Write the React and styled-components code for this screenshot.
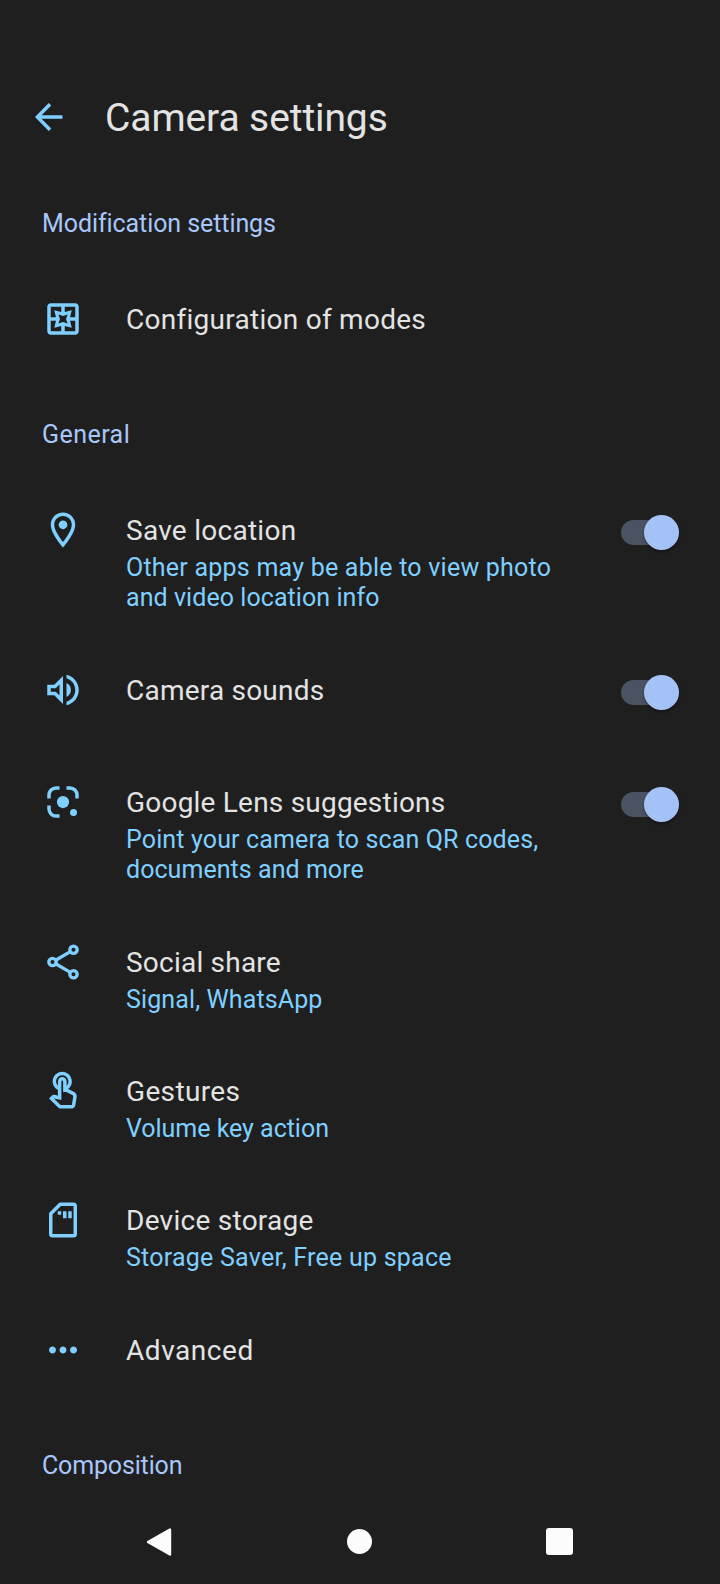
import React, { useState } from 'react';
import styled, { createGlobalStyle } from 'styled-components';
import { MdOutlinePages, MdOutlineLocationOn, MdOutlineVolumeUp, MdOutlineTouchApp, MdMoreHoriz } from 'react-icons/md';

const LensIcon = () => (
  <svg viewBox="0 0 24 24" fill="none">
    <path d="M4 10V8a4 4 0 0 1 4-4h2M14 4h2a4 4 0 0 1 4 4v2M4 14v2a4 4 0 0 0 4 4h2" stroke="currentColor" strokeWidth="2" />
    <circle cx="12" cy="12" r="3.5" fill="currentColor" />
    <circle cx="18" cy="18" r="2" fill="currentColor" />
  </svg>
);

const ShareIcon = () => (
  <svg viewBox="0 0 24 24" fill="none" stroke="currentColor" strokeWidth="1.9">
    <path d="M7.8 11L16.2 6.1M7.8 13L16.2 17.9" />
    <circle cx="18" cy="5" r="2.1" />
    <circle cx="6" cy="12" r="2.1" />
    <circle cx="18" cy="19" r="2.1" />
  </svg>
);

const StorageIcon = () => (
  <svg viewBox="0 0 24 24" fill="none">
    <path d="M10.4 3H18a1 1 0 0 1 1 1v16a1 1 0 0 1-1 1H6a1 1 0 0 1-1-1V8.4z" stroke="currentColor" strokeWidth="2" strokeLinejoin="round" />
    <path d="M9 7h2v2H9zM12 7h2v4h-2zM15 7h2v4h-2z" fill="currentColor" />
  </svg>
);

const generalItems = [
  {
    id: 'location',
    icon: MdOutlineLocationOn,
    title: 'Save location',
    lines: [
      { text: 'Other apps may be able to view photo', tracking: 0.23 },
      { text: 'and video location info', tracking: 0.06 },
    ],
    toggle: true,
  },
  { id: 'sounds', icon: MdOutlineVolumeUp, title: 'Camera sounds', tracking: 0.22, toggle: true },
  {
    id: 'lens',
    icon: LensIcon,
    title: 'Google Lens suggestions',
    tracking: 0.21,
    lines: [
      { text: 'Point your camera to scan QR codes,', tracking: 0.14 },
      { text: 'documents and more', tracking: 0.05 },
    ],
    toggle: true,
  },
  { id: 'share', icon: ShareIcon, title: 'Social share', tracking: 0.22, lines: [{ text: 'Signal, WhatsApp', tracking: 0.12 }] },
  { id: 'gestures', icon: MdOutlineTouchApp, title: 'Gestures', tracking: 0.35, lines: [{ text: 'Volume key action', tracking: -0.03 }] },
  { id: 'storage', icon: StorageIcon, title: 'Device storage', lines: [{ text: 'Storage Saver, Free up space', tracking: 0.24 }] },
  { id: 'advanced', icon: MdMoreHoriz, title: 'Advanced', tracking: 0.55 },
];

const SettingRow = ({ item, checked, onToggle }) => {
  const Icon = item.icon;
  return (
    <Row>
      <IconBox>
        <Icon />
      </IconBox>
      <RowText>
        <RowTitle $tracking={item.tracking}>{item.title}</RowTitle>
        {item.lines && item.lines.map((line) => (
          <RowLine key={line.text} $tracking={line.tracking}>{line.text}</RowLine>
        ))}
      </RowText>
      {item.toggle && (
        <Switch role="switch" aria-checked={checked} aria-label={item.title} onClick={onToggle}>
          <Thumb $on={checked} />
        </Switch>
      )}
    </Row>
  );
};

const App = () => {
  const [enabled, setEnabled] = useState({ location: true, sounds: true, lens: true });

  const toggle = (id) => setEnabled({ ...enabled, [id]: !enabled[id] });

  return (
    <Screen>
      <GlobalStyle />
      <Header>
        <BackButton aria-label="Back">
          <svg width="28" height="28" viewBox="0 0 28 28" fill="none" stroke="currentColor" strokeWidth="3.5">
            <path d="M27.5 14H2.5M15 1.2L2.4 14l12.6 12.8" />
          </svg>
        </BackButton>
        <Title>Camera settings</Title>
      </Header>
      <List>
        <SectionTitle $tracking={-0.08}>Modification settings</SectionTitle>
        <SettingRow item={{ icon: MdOutlinePages, title: 'Configuration of modes' }} />
        <SectionTitle $tracking={0.45}>General</SectionTitle>
        {generalItems.map((item) => (
          <SettingRow key={item.id} item={item} checked={enabled[item.id]} onToggle={() => toggle(item.id)} />
        ))}
        <SectionTitle $tracking={-0.16}>Composition</SectionTitle>
      </List>
      <NavBar>
        <svg width="26" height="30" viewBox="0 0 26 30">
          <path d="M2 15L24 2.5v25z" fill="currentColor" stroke="currentColor" strokeWidth="2.4" strokeLinejoin="round" />
        </svg>
        <HomeDot />
        <RecentSquare />
      </NavBar>
    </Screen>
  );
};

// Styled Components
const GlobalStyle = createGlobalStyle`
  * {
    box-sizing: border-box;
  }
  body {
    margin: 0;
    background: #1f1f1f;
  }
`;

const Screen = styled.div`
  display: flex;
  flex-direction: column;
  width: 720px;
  height: 1584px;
  overflow: hidden;
  background: #1f1f1f;
  color: #e3e3e3;
  font-family: Roboto, "Open Sans", sans-serif;
`;

const Header = styled.header`
  display: flex;
  align-items: center;
  flex: none;
  height: 172px;
  padding: 61px 35px 0;
`;

const BackButton = styled.button`
  display: flex;
  width: 28px;
  height: 28px;
  margin-right: 42px;
  padding: 0;
  border: none;
  background: none;
  color: #7fcfff;
`;

const Title = styled.h1`
  margin: 0;
  padding-top: 3px;
  font-size: 39px;
  font-weight: 400;
  line-height: 50px;
  letter-spacing: -0.1px;
  white-space: nowrap;
`;

const List = styled.main`
  flex: 1;
  min-height: 0;
  overflow: hidden;
`;

const SectionTitle = styled.h2`
  height: 99px;
  margin: 0;
  padding: 35px 42px 0;
  color: #a8c7fa;
  font-size: 25px;
  font-weight: 400;
  line-height: 33px;
  letter-spacing: ${(props) => props.$tracking}px;
`;

const Row = styled.div`
  display: flex;
  align-items: flex-start;
  min-height: 112px;
  padding: 27px 41px 28px 42px;
`;

const IconBox = styled.div`
  display: flex;
  flex: none;
  width: 42px;
  height: 42px;
  margin-right: 42px;
  color: #7fcfff;
  svg {
    width: 42px;
    height: 42px;
  }
`;

const RowText = styled.div`
  flex: 1;
  padding-top: 3px;
  white-space: nowrap;
`;

const RowTitle = styled.div`
  margin-bottom: 4px;
  font-size: 28px;
  line-height: 37px;
  letter-spacing: ${(props) => props.$tracking || 0.27}px;
`;

const RowLine = styled.div`
  color: #7fcfff;
  font-size: 25px;
  line-height: 30.4px;
  letter-spacing: ${(props) => props.$tracking}px;
`;

const Switch = styled.button`
  display: flex;
  align-items: center;
  flex: none;
  width: 58px;
  height: 25px;
  margin-top: 11px;
  padding: 0;
  border: none;
  border-radius: 13px;
  background: #4a5362;
`;

const Thumb = styled.span`
  width: 35px;
  height: 35px;
  flex: none;
  margin-left: ${(props) => (props.$on ? '23px' : '0')};
  border-radius: 50%;
  background: #a5c2f6;
  box-shadow: 0 2px 3px rgba(0, 0, 0, 0.35);
`;

const NavBar = styled.nav`
  display: flex;
  align-items: center;
  justify-content: space-between;
  flex: none;
  height: 84px;
  padding: 0 147px 1px 146px;
  color: #fcfcfc;
`;

const HomeDot = styled.span`
  width: 25px;
  height: 25px;
  border-radius: 50%;
  background: currentColor;
`;

const RecentSquare = styled.span`
  width: 27px;
  height: 27px;
  border-radius: 3px;
  background: currentColor;
`;

export default App;
